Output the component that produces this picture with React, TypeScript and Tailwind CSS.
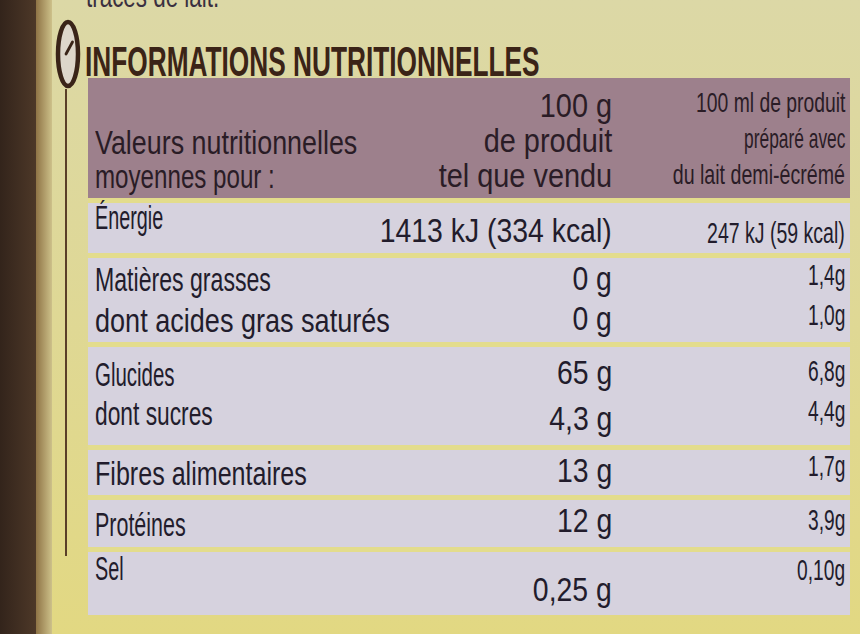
type Line = { t: string; s: string };
type Cell = { wrap: string; lh: string; lines: Line[] };
type Row = { h: string; cells: [Cell, Cell, Cell] };

const rows: Row[] = [
  {
    h: 'h-[55px]',
    cells: [
      { wrap: '-mt-[3px]', lh: 'leading-[36px]', lines: [{ t: 'Énergie', s: 'scale-x-[0.6]' }] },
      { wrap: 'pt-[10px]', lh: 'leading-[36px]', lines: [{ t: '1413 kJ (334 kcal)', s: 'scale-x-[0.86]' }] },
      { wrap: 'pt-[12px]', lh: 'leading-[36px]', lines: [{ t: '247 kJ (59 kcal)', s: 'scale-x-[0.65]' }] },
    ],
  },
  {
    h: 'h-[89px]',
    cells: [
      {
        wrap: 'pt-[1px]',
        lh: 'leading-[41px]',
        lines: [
          { t: 'Matières grasses', s: 'scale-x-[0.7]' },
          { t: 'dont acides gras saturés', s: 'scale-x-[0.82]' },
        ],
      },
      {
        wrap: 'pt-[1px]',
        lh: 'leading-[40px]',
        lines: [
          { t: '0 g', s: 'scale-x-[0.86]' },
          { t: '0 g', s: 'scale-x-[0.86]' },
        ],
      },
      {
        wrap: '-mt-[3px]',
        lh: 'leading-[40px]',
        lines: [
          { t: '1,4g', s: 'scale-x-[0.64]' },
          { t: '1,0g', s: 'scale-x-[0.64]' },
        ],
      },
    ],
  },
  {
    h: 'h-[103px]',
    cells: [
      {
        wrap: 'pt-[8px]',
        lh: 'leading-[39px]',
        lines: [
          { t: 'Glucides', s: 'scale-x-[0.62]' },
          { t: 'dont sucres', s: 'scale-x-[0.69]' },
        ],
      },
      {
        wrap: 'pt-[3px]',
        lh: 'leading-[46px]',
        lines: [
          { t: '65 g', s: 'scale-x-[0.86]' },
          { t: '4,3 g', s: 'scale-x-[0.86]' },
        ],
      },
      {
        wrap: 'pt-[4px]',
        lh: 'leading-[40px]',
        lines: [
          { t: '6,8g', s: 'scale-x-[0.64]' },
          { t: '4,4g', s: 'scale-x-[0.64]' },
        ],
      },
    ],
  },
  {
    h: 'h-[50px]',
    cells: [
      { wrap: 'pt-[6px]', lh: 'leading-[36px]', lines: [{ t: 'Fibres alimentaires', s: 'scale-x-[0.76]' }] },
      { wrap: 'pt-[3px]', lh: 'leading-[36px]', lines: [{ t: '13 g', s: 'scale-x-[0.86]' }] },
      { wrap: '-mt-[2px]', lh: 'leading-[36px]', lines: [{ t: '1,7g', s: 'scale-x-[0.64]' }] },
    ],
  },
  {
    h: 'h-[52px]',
    cells: [
      { wrap: 'pt-[7px]', lh: 'leading-[36px]', lines: [{ t: 'Protéines', s: 'scale-x-[0.65]' }] },
      { wrap: 'pt-[3px]', lh: 'leading-[36px]', lines: [{ t: '12 g', s: 'scale-x-[0.86]' }] },
      { wrap: 'pt-[2px]', lh: 'leading-[36px]', lines: [{ t: '3,9g', s: 'scale-x-[0.64]' }] },
    ],
  },
  {
    h: 'h-[68px]',
    cells: [
      { wrap: '-mt-[1px]', lh: 'leading-[36px]', lines: [{ t: 'Sel', s: 'scale-x-[0.6]' }] },
      { wrap: 'pt-[20px]', lh: 'leading-[36px]', lines: [{ t: '0,25 g', s: 'scale-x-[0.86]' }] },
      { wrap: 'pt-0', lh: 'leading-[36px]', lines: [{ t: '0,10g', s: 'scale-x-[0.64]' }] },
    ],
  },
];

function Lines({ cell, right }: { cell: Cell; right?: boolean }) {
  return (
    <div className={`${cell.wrap} flex flex-col ${right ? 'items-end' : 'items-start'}`}>
      {cell.lines.map((l, i) => (
        <div key={i} className={`${cell.lh} shrink-0 whitespace-nowrap`}>
          <span className={`inline-block ${right ? 'origin-right' : 'origin-left'} ${l.s}`}>{l.t}</span>
        </div>
      ))}
    </div>
  );
}

function ClockIcon() {
  return (
    <svg width="26" height="70" viewBox="0 0 26 70" className="shrink-0">
      <ellipse cx="13" cy="35" rx="10" ry="32" fill="#ddd6ca" stroke="#3a2418" strokeWidth="4.5" />
      <path d="M11 35 L17.5 23" stroke="#3a2418" strokeWidth="2.8" strokeLinecap="round" />
    </svg>
  );
}

export default function App() {
  return (
    <div className="flex h-[634px] w-[860px] overflow-hidden bg-gradient-to-b from-[#dcd8a6] to-[#e2d882] font-['Liberation_Sans',Arial,sans-serif]">
      {/* jar edge */}
      <div className="w-[36px] shrink-0 bg-gradient-to-r from-[#33241b] to-[#4d3828]" />
      <div className="w-[16px] shrink-0 bg-gradient-to-r from-[#8f7446] to-[#cdc18a]" />

      {/* icon + rule */}
      <div className="flex w-[32px] shrink-0 flex-col items-center pt-[19px]">
        <ClockIcon />
        <div className="-ml-[4px] h-[467px] w-[2px] bg-[#5a3f28]" />
      </div>

      <div className="flex min-w-0 flex-1 flex-col">
        <div className="h-[14px] overflow-hidden pl-[2px] text-[32px] text-[#3a3040]">
          <div className="-mt-[22px] leading-[36px] whitespace-nowrap">
            <span className="inline-block origin-left scale-x-[0.7]">traces de lait.</span>
          </div>
        </div>

        <div className="h-[64px] pl-[1px] pt-[27px]">
          <div className="text-[42px] font-bold leading-[42px] whitespace-nowrap text-[#3b2417]">
            <span className="inline-block origin-left scale-x-[0.625]">INFORMATIONS NUTRITIONNELLES</span>
          </div>
        </div>

        <div className="ml-[4px] w-[762px] text-[#221c2c]">
          {/* header */}
          <div className="grid h-[120px] grid-cols-[310px_207px_233px] bg-[#9d808c] pl-[7px] pr-[5px] text-[#2a1c26]">
            <div className="text-[34px]">
              <Lines
                cell={{
                  wrap: 'pt-[47px]',
                  lh: 'leading-[34px]',
                  lines: [
                    { t: 'Valeurs nutritionnelles', s: 'scale-x-[0.79]' },
                    { t: 'moyennes pour :', s: 'scale-x-[0.71]' },
                  ],
                }}
              />
            </div>
            <div className="text-[34px]">
              <Lines
                right
                cell={{
                  wrap: 'pt-[10px]',
                  lh: 'leading-[35px]',
                  lines: [
                    { t: '100 g', s: 'scale-x-[0.85]' },
                    { t: 'de produit', s: 'scale-x-[0.85]' },
                    { t: 'tel que vendu', s: 'scale-x-[0.85]' },
                  ],
                }}
              />
            </div>
            <div className="text-[28px]">
              <Lines
                right
                cell={{
                  wrap: 'pt-[7px]',
                  lh: 'leading-[36px]',
                  lines: [
                    { t: '100 ml de produit', s: 'scale-x-[0.69]' },
                    { t: 'préparé avec', s: 'scale-x-[0.62]' },
                    { t: 'du lait demi-écrémé', s: 'scale-x-[0.7]' },
                  ],
                }}
              />
            </div>
          </div>

          {/* values */}
          {rows.map((r, i) => (
            <div
              key={i}
              className={`grid ${r.h} grid-cols-[310px_207px_233px] border-t-[5px] border-[#e3dc8c] bg-[#d6d2de] pl-[7px] pr-[5px]`}
            >
              <div className="text-[33px]">
                <Lines cell={r.cells[0]} />
              </div>
              <div className="text-[33px]">
                <Lines cell={r.cells[1]} right />
              </div>
              <div className="text-[30px]">
                <Lines cell={r.cells[2]} right />
              </div>
            </div>
          ))}
        </div>
      </div>
    </div>
  );
}
